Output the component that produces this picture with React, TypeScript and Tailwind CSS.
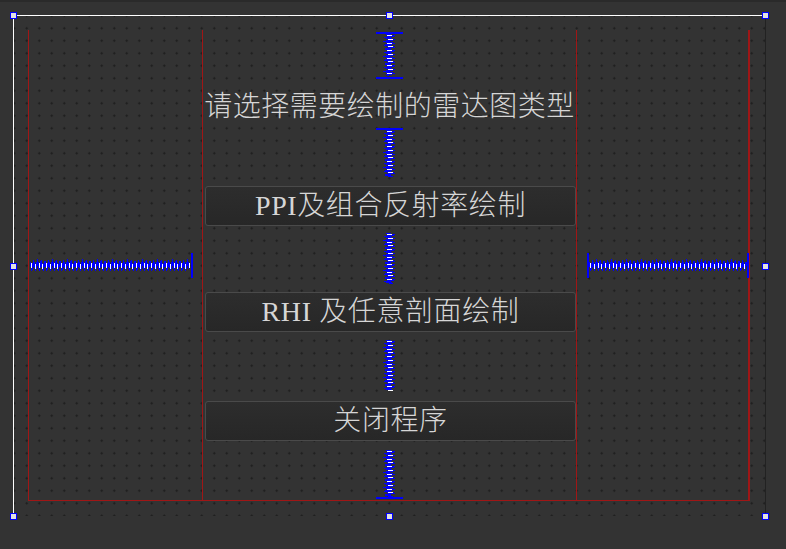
import React from "react";

const BLUE = "#0000ff";

function VSpacer({ h, capTop = false, capBottom = false }: { h: number; capTop?: boolean; capBottom?: boolean }) {
  const w = 27;
  const cx = 13.5;
  const y0 = capTop ? 2 : 0;
  const y1 = h - (capBottom ? 2 : 0);
  const pts: string[] = [];
  let i = 0;
  for (let y = y0; y <= y1; y += 1.875) {
    pts.push(`${i % 2 === 0 ? cx - 3 : cx + 3},${y.toFixed(2)}`);
    i++;
  }
  const ticks: React.ReactNode[] = [];
  let k = 0;
  for (let y = y0 + 1.5; y < y1 - 1; y += 3.75) {
    const off = k % 2 === 0 ? -0.5 : 0.5;
    ticks.push(<line key={k} x1={cx - 2.5 + off} x2={cx + 2.5 + off} y1={y} y2={y} stroke="#ffffff" strokeWidth={1} />);
    k++;
  }
  return (
    <svg width={w} height={h} className="block shrink-0" shapeRendering="crispEdges">
      <polyline points={pts.join(" ")} fill="none" stroke={BLUE} strokeWidth={2} />
      {ticks}
      {capTop && <line x1={0} x2={w} y1={1} y2={1} stroke={BLUE} strokeWidth={2} />}
      {capBottom && <line x1={0} x2={w} y1={h - 1} y2={h - 1} stroke={BLUE} strokeWidth={2} />}
    </svg>
  );
}

function HSpacer({ w, capStart = false, capEnd = false }: { w: number; capStart?: boolean; capEnd?: boolean }) {
  const h = 25;
  const cy = 12.5;
  const x0 = capStart ? 2 : 0;
  const x1 = w - (capEnd ? 2 : 0);
  const pts: string[] = [];
  let i = 0;
  for (let x = x0; x <= x1; x += 1.875) {
    pts.push(`${x.toFixed(2)},${i % 2 === 0 ? cy - 3 : cy + 3}`);
    i++;
  }
  const ticks: React.ReactNode[] = [];
  let k = 0;
  for (let x = x0 + 1.5; x < x1 - 1; x += 3.75) {
    const off = k % 2 === 0 ? -0.5 : 0.5;
    ticks.push(<line key={k} y1={cy - 2.5 + off} y2={cy + 2.5 + off} x1={x} x2={x} stroke="#ffffff" strokeWidth={1} />);
    k++;
  }
  return (
    <svg width={w} height={h} className="block shrink-0" shapeRendering="crispEdges">
      <polyline points={pts.join(" ")} fill="none" stroke={BLUE} strokeWidth={2} />
      {ticks}
      {capStart && <line x1={1} x2={1} y1={0} y2={h} stroke={BLUE} strokeWidth={2} />}
      {capEnd && <line x1={w - 1} x2={w - 1} y1={0} y2={h} stroke={BLUE} strokeWidth={2} />}
    </svg>
  );
}

function Handle({ className }: { className: string }) {
  return <div className={`absolute w-[7px] h-[7px] bg-[#e2e2e2] border border-[#0000ff] ${className}`} />;
}

function Btn({ children }: { children: React.ReactNode }) {
  return (
    <div className="ml-[2px] h-[40px] shrink-0 rounded-[3px] border border-[#4a4a4a] bg-gradient-to-b from-[#2d2d2d] to-[#272727] flex items-center justify-center text-[28px] leading-none tracking-[0.6px] font-light text-[#d6d6d6] [font-family:'Liberation_Serif','Noto_Sans_CJK_SC',serif]">
      {children}
    </div>
  );
}

export default function App() {
  return (
    <div className="w-[786px] h-[549px] bg-[#333333] overflow-hidden">
      <div className="h-[2px] bg-[#2a2a2a]" />
      <div className="relative ml-[13px] mt-[13px] w-[753px] h-[501px] border-t border-l border-t-white border-l-white border-r border-r-[#222222] bg-[radial-gradient(circle,#1d1d1d_0.9px,transparent_1.2px)] bg-[length:12.5px_12.5px] bg-[position:-6px_6px]">
        <div className="ml-[14px] mt-[14px] w-[722px] h-[471px] flex border-l border-r-2 border-b border-l-[#a01616] border-r-[#a01616] border-b-[#a01616]">
          {/* left column */}
          <div className="w-[173px] shrink-0 flex items-center pl-[1px] pt-[1px]">
            <HSpacer w={163} capEnd />
          </div>
          {/* middle column */}
          <div className="w-[375px] shrink-0 flex flex-col border-l border-r border-l-[#a01616] border-r-[#a01616] pt-[2px]">
            <div className="flex justify-center"><VSpacer h={47} capTop capBottom /></div>
            <div className="h-[49px] shrink-0 flex items-center justify-center text-[28px] leading-none tracking-[0.5px] font-light text-[#d6d6d6] [font-family:'Noto_Sans_CJK_SC',sans-serif]">
              请选择需要绘制的雷达图类型
            </div>
            <div className="flex justify-center"><VSpacer h={49} capTop /></div>
            <div className="h-[9px] shrink-0" />
            <Btn>PPI及组合反射率绘制</Btn>
            <div className="h-[7px] shrink-0" />
            <div className="flex justify-center"><VSpacer h={51} /></div>
            <div className="h-[8px] shrink-0" />
            <Btn>RHI 及任意剖面绘制</Btn>
            <div className="h-[8px] shrink-0" />
            <div className="flex justify-center"><VSpacer h={52} /></div>
            <div className="h-[9px] shrink-0" />
            <Btn>关闭程序</Btn>
            <div className="h-[9px] shrink-0" />
            <div className="flex justify-center"><VSpacer h={49} capBottom /></div>
          </div>
          {/* right column */}
          <div className="flex-1 flex items-center pl-[10px] pt-[1px]">
            <HSpacer w={162} capStart capEnd />
          </div>
        </div>
        <Handle className="left-[-4px] top-[-4px]" />
        <Handle className="left-[372px] top-[-4px]" />
        <Handle className="right-[-4px] top-[-4px]" />
        <Handle className="left-[-4px] top-[247px]" />
        <Handle className="right-[-4px] top-[247px]" />
        <Handle className="left-[-4px] bottom-[-4px]" />
        <Handle className="left-[372px] bottom-[-4px]" />
        <Handle className="right-[-4px] bottom-[-4px]" />
      </div>
    </div>
  );
}
